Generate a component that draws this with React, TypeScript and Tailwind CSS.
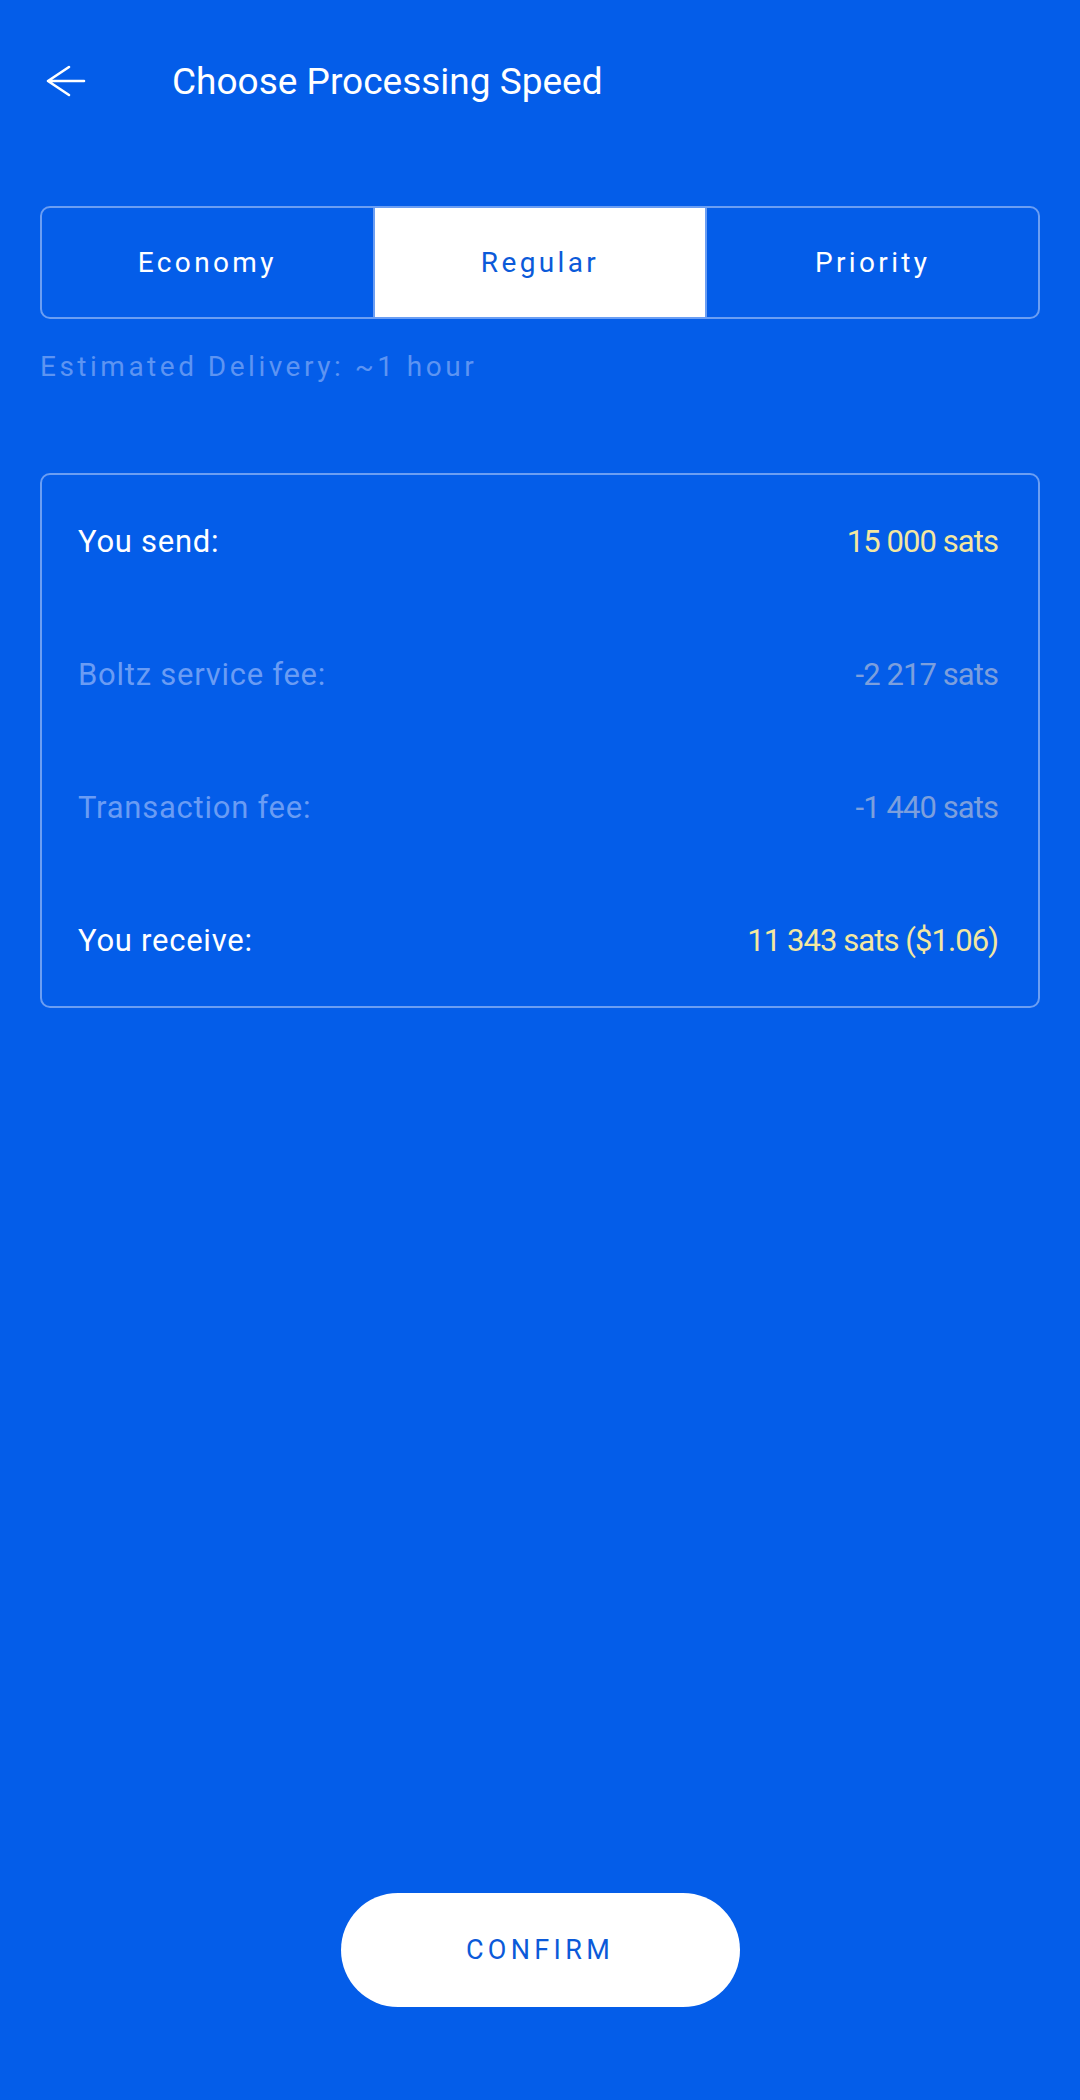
import React from 'react';

const speeds = ['Economy', 'Regular', 'Priority'];

const rows = [
  { label: 'You send:', value: '15 000 sats', strong: true },
  { label: 'Boltz service fee:', value: '-2 217 sats', strong: false },
  { label: 'Transaction fee:', value: '-1 440 sats', strong: false },
  { label: 'You receive:', value: '11 343 sats ($1.06)', strong: true },
];

function BackArrow() {
  return (
    <svg width="40" height="32" viewBox="0 0 40 32" fill="none">
      <path
        d="M38 16H2M2 16L23 2M2 16L23 30"
        stroke="white"
        strokeWidth="2.6"
        strokeLinecap="round"
        strokeLinejoin="round"
      />
    </svg>
  );
}

export default function App() {
  const selected = 'Regular';

  return (
    <div className="flex min-h-[2100px] w-[1080px] flex-col bg-[#045de9] font-['Roboto',sans-serif] text-white">
      {/* header */}
      <div className="flex h-[162px] items-center pl-[46px]">
        <BackArrow />
        <h1 className="ml-[86px] text-[37px] font-normal leading-none">Choose Processing Speed</h1>
      </div>

      <div className="px-10 pt-[44px]">
        {/* speed selector */}
        <div className="flex h-[113px] overflow-hidden rounded-[10px] border-2 border-[#6b9ef3]">
          {speeds.map((s) => (
            <button
              key={s}
              className={
                s === selected
                  ? 'flex flex-1 items-center justify-center border-x-2 border-[#6b9ef3] bg-white text-[28px] tracking-[0.12em] text-[#0b5ad9]'
                  : 'flex flex-1 items-center justify-center text-[28px] tracking-[0.12em] text-white'
              }
            >
              {s}
            </button>
          ))}
        </div>

        <p className="mt-[34px] text-[28px] leading-[28px] tracking-[0.125em] text-[#5d94f2]">
          Estimated Delivery: ~1 hour
        </p>

        {/* summary */}
        <div className="mt-[92px] flex flex-col gap-[102px] rounded-[10px] border-2 border-[#6b9ef3] pb-[50px] pl-[36px] pr-[40px] pt-[51px]">
          {rows.map((r) => (
            <div key={r.label} className="flex items-center justify-between text-[31px] leading-[31px]">
              <span className={r.strong ? 'tracking-[0.024em] text-white' : 'tracking-[0.024em] text-[#6a9cf4]'}>
                {r.label}
              </span>
              <span className={r.strong ? 'tracking-[-0.03em] text-[#f3e7a0]' : 'tracking-[-0.03em] text-[#7c9fdd]'}>
                {r.value}
              </span>
            </div>
          ))}
        </div>
      </div>

      <div className="mt-auto flex justify-center pb-[93px]">
        <button className="flex h-[114px] w-[399px] items-center justify-center rounded-full bg-white text-[27px] tracking-[0.16em] text-[#0b5ad9]">
          CONFIRM
        </button>
      </div>
    </div>
  );
}
